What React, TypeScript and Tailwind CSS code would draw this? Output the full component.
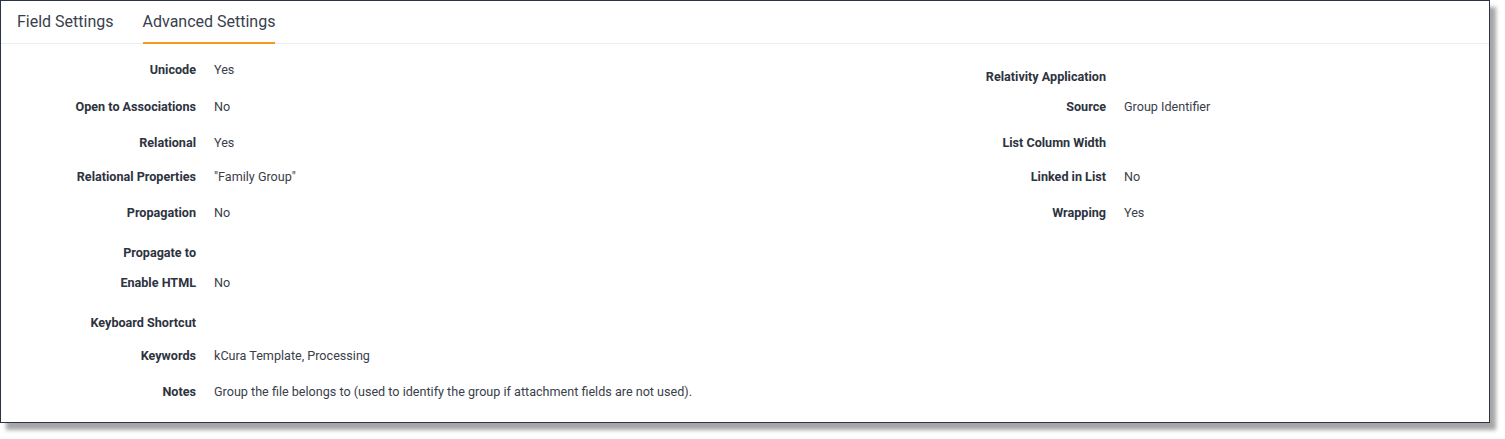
import React from 'react';

type Row = { label: string; value?: string; gap: string };

const leftRows: Row[] = [
  { label: 'Unicode', value: 'Yes', gap: 'mt-0' },
  { label: 'Open to Associations', value: 'No', gap: 'mt-[17px]' },
  { label: 'Relational', value: 'Yes', gap: 'mt-[16px]' },
  { label: 'Relational Properties', value: '"Family Group"', gap: 'mt-[14px]' },
  { label: 'Propagation', value: 'No', gap: 'mt-[16px]' },
  { label: 'Propagate to', gap: 'mt-[20px]' },
  { label: 'Enable HTML', value: 'No', gap: 'mt-[10px]' },
  { label: 'Keyboard Shortcut', gap: 'mt-[20px]' },
  { label: 'Keywords', value: 'kCura Template, Processing', gap: 'mt-[13px]' },
  {
    label: 'Notes',
    value: 'Group the file belongs to (used to identify the group if attachment fields are not used).',
    gap: 'mt-[16px]',
  },
];

const rightRows: Row[] = [
  { label: 'Relativity Application', gap: 'mt-0' },
  { label: 'Source', value: 'Group Identifier', gap: 'mt-[10px]' },
  { label: 'List Column Width', gap: 'mt-[16px]' },
  { label: 'Linked in List', value: 'No', gap: 'mt-[14px]' },
  { label: 'Wrapping', value: 'Yes', gap: 'mt-[16px]' },
];

const FieldList: React.FC<{ rows: Row[] }> = ({ rows }) => (
  <div className="flex flex-col">
    {rows.map((r) => (
      <div key={r.label} className={`flex h-[20px] items-center ${r.gap}`}>
        <div className="w-[195px] shrink-0 text-right text-[12.6px] font-bold text-[#2d3340]">{r.label}</div>
        <div className="pl-[18px] text-[12.6px] whitespace-nowrap text-[#3a404b]">{r.value}</div>
      </div>
    ))}
  </div>
);

const Tab: React.FC<{ label: string; active?: boolean }> = ({ label, active }) => (
  <div className="relative flex h-full items-start pt-[9px]">
    <span className="text-[16px] text-[#39404d]">{label}</span>
    {active && <div className="absolute bottom-[-1px] left-0 right-0 h-[2px] bg-[#f39a1e]" />}
  </div>
);

export default function App() {
  return (
    <div className="w-[1505px] h-[439px] bg-white" style={{ fontFamily: 'Roboto, "Liberation Sans", sans-serif' }}>
      <div className="w-[1490px] h-[423px] border border-[#2b3346] bg-white shadow-[6px_7px_4px_rgba(0,0,0,0.35)]">
        <header className="flex h-[43px] gap-[29px] border-b border-[#e8edf2] pl-[16px]">
          <Tab label="Field Settings" />
          <Tab label="Advanced Settings" active />
        </header>
        <div className="flex">
          <div className="w-[910px] shrink-0 pt-[16px]">
            <FieldList rows={leftRows} />
          </div>
          <div className="pt-[23px]">
            <FieldList rows={rightRows} />
          </div>
        </div>
      </div>
    </div>
  );
}
